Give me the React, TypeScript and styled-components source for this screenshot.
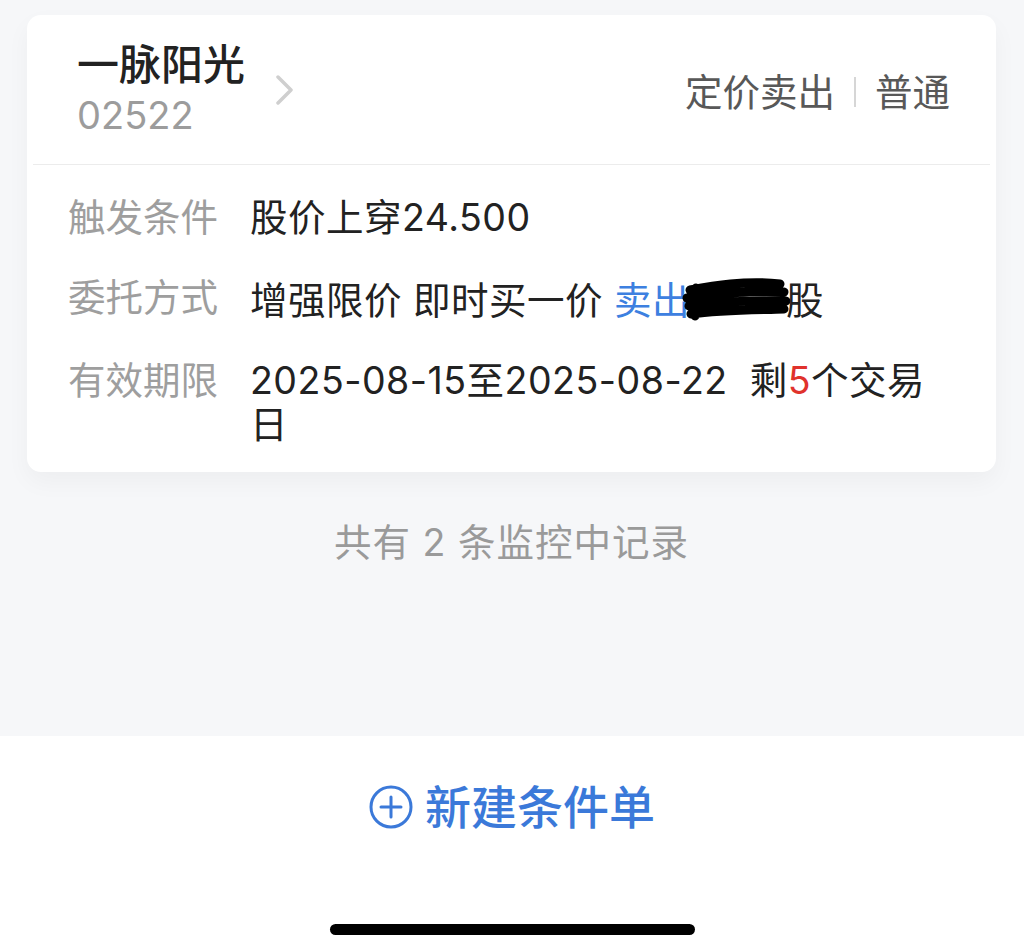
import styled, { createGlobalStyle } from 'styled-components';

const GlobalStyle = createGlobalStyle`
  body {
    margin: 0;
    background: #f6f7f9;
    font-family: 'Inter', 'Noto Sans CJK SC', sans-serif;
  }
`;

const Page = styled.div`
  display: flex;
  flex-direction: column;
  height: 937px;
  overflow: hidden;
`;

const Content = styled.div`
  flex: 1;
  padding: 15px 28px 0 27px;
  background: #f6f7f9;
`;

const Card = styled.div`
  background: #fff;
  border-radius: 14px;
  box-shadow: 0 10px 24px rgba(0, 0, 0, 0.04);
`;

const Header = styled.div`
  display: flex;
  align-items: center;
  justify-content: space-between;
  height: 149px;
  padding: 0 46px 0 50px;
  box-sizing: border-box;
`;

const StockLink = styled.div`
  display: flex;
  align-items: center;
  gap: 30px;
`;

const NameStack = styled.div`
  display: flex;
  flex-direction: column;
`;

const StockName = styled.div`
  font-size: 42px;
  line-height: 50px;
  font-weight: 500;
  color: #222;
`;

const StockCode = styled.div`
  font-size: 38px;
  line-height: 50px;
  color: #9c9c9c;
`;

const OrderType = styled.div`
  display: flex;
  align-items: center;
  font-size: 37.5px;
  color: #585858;
`;

const Sep = styled.span`
  width: 2px;
  height: 30px;
  margin: 4px 19px 0;
  background: #d6d6d6;
`;

const Divider = styled.div`
  margin: 0 6px;
  border-top: 1px solid #ececec;
`;

const Rows = styled.div`
  display: flex;
  flex-direction: column;
  gap: 36px;
  padding: 31px 46px 25px 41px;
`;

const Row = styled.div`
  display: flex;
  align-items: flex-start;
  font-size: 37.5px;
  line-height: 44px;
`;

const Label = styled.div`
  flex: 0 0 182px;
  color: #9e9e9e;
`;

const Value = styled.div`
  flex: 1;
  color: #222;
  letter-spacing: 0.5px;
`;

const Tone = styled.span<{ $color: string }>`
  color: ${(p) => p.$color};
`;

const Redact = styled.svg`
  display: inline-block;
  vertical-align: -8px;
  margin-left: -8px;
  margin-right: -6px;
`;

const Summary = styled.div`
  margin-top: 49px;
  text-align: center;
  font-size: 37.5px;
  line-height: 44px;
  letter-spacing: 1px;
  color: #9a9a9a;
`;

const Footer = styled.div`
  height: 201px;
  background: #fff;
  display: flex;
  flex-direction: column;
  align-items: center;
`;

const NewButton = styled.button`
  display: flex;
  align-items: center;
  gap: 12px;
  margin-top: 45px;
  padding: 0;
  border: none;
  background: none;
  font-family: inherit;
  font-size: 46px;
  line-height: 52px;
  font-weight: 500;
  color: #3b79d9;
  cursor: pointer;
`;

const HomeBar = styled.div`
  margin-top: auto;
  margin-bottom: 2px;
  width: 365px;
  height: 11px;
  border-radius: 6px;
  background: #000;
`;

export default function App() {
  return (
    <>
      <GlobalStyle />
      <Page>
        <Content>
          <Card>
            <Header>
              <StockLink>
                <NameStack>
                  <StockName>一脉阳光</StockName>
                  <StockCode>02522</StockCode>
                </NameStack>
                <svg width="20" height="30" viewBox="0 0 20 30">
                  <path d="M3 2 L16 15 L3 28" fill="none" stroke="#cfcfcf" strokeWidth="3.5" strokeLinecap="round" strokeLinejoin="round" />
                </svg>
              </StockLink>
              <OrderType>
                定价卖出
                <Sep />
                普通
              </OrderType>
            </Header>
            <Divider />
            <Rows>
              <Row>
                <Label>触发条件</Label>
                <Value>股价上穿24.500</Value>
              </Row>
              <Row>
                <Label>委托方式</Label>
                <Value>
                  增强限价 即时买一价 <Tone $color="#3d80e0">卖出</Tone>
                  <Redact width="110" height="46" viewBox="0 0 110 46">
                    <path
                      d="M8 14 C30 10 64 4 98 8 M5 22 C30 18 72 14 102 16 M7 30 C34 26 72 24 104 25 M9 38 C38 34 72 34 102 33 M14 12 L13 40"
                      fill="none"
                      stroke="#000"
                      strokeWidth="9"
                      strokeLinecap="round"
                    />
                  </Redact>
                  股
                </Value>
              </Row>
              <Row>
                <Label>有效期限</Label>
                <Value>
                  2025-08-15至2025-08-22{'\u00a0 '}剩<Tone $color="#e0322c">5</Tone>个交易日
                </Value>
              </Row>
            </Rows>
          </Card>
          <Summary>共有 2 条监控中记录</Summary>
        </Content>
        <Footer>
          <NewButton>
            <svg width="44" height="44" viewBox="0 0 44 44">
              <circle cx="22" cy="22" r="20" fill="none" stroke="#3b79d9" strokeWidth="3" />
              <path d="M22 12 V32 M12 22 H32" stroke="#3b79d9" strokeWidth="3" strokeLinecap="round" />
            </svg>
            新建条件单
          </NewButton>
          <HomeBar />
        </Footer>
      </Page>
    </>
  );
}
